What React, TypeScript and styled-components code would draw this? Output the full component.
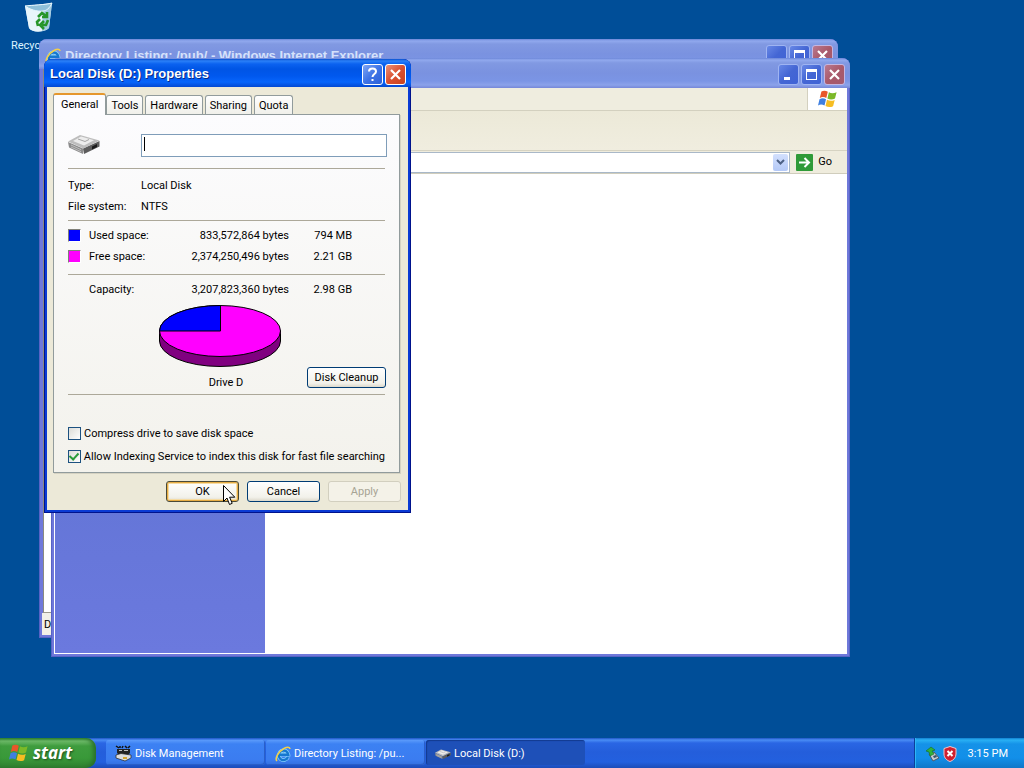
import React from "react";
import styled, { createGlobalStyle, css } from "styled-components";

const uiFont = `Roboto, "Liberation Sans", Arial, sans-serif`;
const titleFont = `"Liberation Sans", Arial, sans-serif`;

const GlobalStyle = createGlobalStyle`
  * { box-sizing: border-box; }
  body { margin: 0; background: #004e98; font-family: ${uiFont}; font-size: 11px; line-height: 16px; color: #000; }
  button, input { font: inherit; color: inherit; margin: 0; }
  svg { display: block; flex: none; }
`;

const Screen = styled.div`
  display: flex;
  flex-direction: column;
  height: 100vh;
  overflow: hidden;
  cursor: default;
`;

const Desktop = styled.main`
  position: relative;
  flex: 1;
  min-height: 0;
  overflow: hidden;
  background: #004e98;
`;

const DesktopItem = styled.a`
  position: absolute;
  left: 0;
  top: 2px;
  width: 78px;
  display: flex;
  flex-direction: column;
  align-items: center;
  gap: 5px;
  color: #dcf4ff;
  font-size: 11px;
  line-height: 16px;
  text-decoration: none;
  white-space: nowrap;
`;

const AppWindow = styled.section<{ $x: number; $y: number }>`
  position: absolute;
  left: ${(p) => p.$x}px;
  top: ${(p) => p.$y}px;
  width: 799px;
  height: 599px;
  display: flex;
  flex-direction: column;
  padding: 0 3px 3px;
  background: #6f78da;
  border-radius: 8px 8px 0 0;
  overflow: hidden;
  box-shadow: inset 1px -1px 0 #5763c4, inset -1px 0 0 #5763c4;
`;

const WindowBar = styled.header`
  display: flex;
  align-items: center;
  justify-content: flex-end;
  gap: 2px;
  flex: none;
  height: 30px;
  margin: 0 -3px;
  padding: 3px 5px 0 6px;
  background: linear-gradient(#6b86d8 0, #91a9ee 2px, #8199e2 5px, #7a92e0 15px, #7b95e5 23px, #8ba2ea 27px, #7587d8 30px);
`;

const BarTitle = styled.h2`
  flex: 1;
  margin: 0 0 0 2px;
  font-family: ${titleFont};
  font-size: 13px;
  line-height: 20px;
  font-weight: 700;
  color: #d5e1fb;
  white-space: nowrap;
`;

const CaptionButton = styled.button<{ $tone: "blue" | "red" | "dimBlue" | "dimRed" }>`
  display: grid;
  place-items: center;
  flex: none;
  width: 21px;
  height: 21px;
  padding: 0;
  border: 1px solid #fff;
  border-radius: 3px;
  color: #fff;
  ${(p) => p.$tone === "blue" && css`background: linear-gradient(135deg, #7fa6f5, #3f74e6 50%, #2c60d8);`}
  ${(p) => p.$tone === "red" && css`background: linear-gradient(135deg, #ec9278, #da5030 50%, #c8431f);`}
  ${(p) => p.$tone === "dimBlue" && css`background: linear-gradient(135deg, #6888e6, #4466d4 50%, #3f62d6); border-color: #9fb4f2;`}
  ${(p) => p.$tone === "dimRed" && css`background: linear-gradient(135deg, #b9798f, #a9596a 50%, #a3596f); border-color: #c5b6e0;`}
`;

const MenuRow = styled.nav`
  display: flex;
  justify-content: flex-end;
  flex: none;
  height: 23px;
  background: #efeddf;
  border-bottom: 1px solid #d3d0bf;
`;

const Throbber = styled.div`
  display: grid;
  place-items: center;
  width: 40px;
  background: #fff;
  border-left: 1px solid #d3d0bf;
`;

const ToolRow = styled.div`
  flex: none;
  height: 40px;
  background: linear-gradient(#ece9d8, #f0eddf);
  border-bottom: 1px solid #d6d3c2;
`;

const AddressRow = styled.form`
  display: flex;
  align-items: center;
  flex: none;
  gap: 6px;
  height: 23px;
  padding: 0 15px 0 2px;
  background: #efecdd;
  border-bottom: 1px solid #d0cdbc;
`;

const AddressBox = styled.div`
  display: flex;
  flex: 1;
  height: 21px;
  padding: 1px;
  background: #fff;
  border: 1px solid #a9b8c8;
`;

const AddressInput = styled.input`
  flex: 1;
  min-width: 0;
  padding: 0 4px;
  border: 0;
  background: none;
  outline: none;
`;

const DropButton = styled.button`
  display: grid;
  place-items: center;
  width: 15px;
  padding: 0;
  border: 0;
  border-radius: 2px;
  background: linear-gradient(#d3e0fd, #b4c9f7);
`;

const GoButton = styled.button`
  display: flex;
  align-items: center;
  gap: 5px;
  padding: 0;
  border: 0;
  background: none;
`;

const FolderBody = styled.div`
  display: flex;
  flex: 1;
  min-height: 0;
  padding: 1px;
  background: #fff;
`;

const TaskPane = styled.aside`
  width: 210px;
  background: linear-gradient(#7ba2e7, #6576d8 70%, #6b79de);
`;

const PageBody = styled.div`
  flex: 1;
  margin-left: 1px;
  background: #fff;
  border-left: 1px solid #8a8a80;
  border-bottom: 1px solid #9c9a8c;
`;

const StatusBar = styled.footer`
  flex: none;
  height: 22px;
  padding: 2px 2px 0;
  line-height: 20px;
  background: #f1f0e8;
`;

const Dialog = styled.section`
  position: absolute;
  left: 44px;
  top: 59px;
  width: 367px;
  background: #0a3ad4;
  padding: 0 3px 3px;
  border-radius: 8px 8px 0 0;
  overflow: hidden;
  box-shadow: inset 1px -1px 0 #00138c, inset -1px 0 0 #00138c;
`;

const DialogBar = styled.header`
  display: flex;
  align-items: center;
  gap: 2px;
  height: 28px;
  margin: 0 -3px;
  padding: 2px 5px 0 6px;
  background: linear-gradient(#0b50cf 0, #2a80f8 2px, #0b62f0 5px, #0055e5 10px, #0058ee 17px, #0765fb 23px, #0349d2 28px);
`;

const DialogTitle = styled.h1`
  flex: 1;
  margin: 0;
  font-family: ${titleFont};
  font-size: 13px;
  line-height: 20px;
  font-weight: 700;
  color: #fff;
  text-shadow: 1px 1px 0 #0a2a88;
  white-space: nowrap;
`;

const DialogBody = styled.form`
  padding: 6px 8px 8px 6px;
  background: #ece9d8;
`;

const Tabs = styled.div`
  display: flex;
  align-items: flex-end;
  gap: 2px;
  height: 21px;
`;

const Tab = styled.button<{ $active?: boolean }>`
  height: 19px;
  padding: 0 4px;
  border: 1px solid #919b9c;
  border-bottom: 0;
  border-radius: 3px 3px 0 0;
  background: linear-gradient(#fefefe, #f0f0ea);
  line-height: 19px;
  ${(p) =>
    p.$active &&
    css`
      position: relative;
      height: 22px;
      margin: 0 -2px -1px 0;
      padding: 0 7px 2px;
      border-top: 2px solid #e5972d;
      background: #fcfcfe;
    `}
`;

const Panel = styled.div`
  padding: 19px 14px 4px;
  border: 1px solid #919b9c;
  background: linear-gradient(#fcfcfe, #f3f2ec);
  box-shadow: 1px 1px 0 #d5d2c2;
`;

const NameRow = styled.div`
  display: flex;
  align-items: flex-start;
  gap: 41px;
  padding-bottom: 11px;
`;

const NameInput = styled.input`
  flex: 1;
  min-width: 0;
  height: 23px;
  margin-right: -2px;
  padding: 0 3px;
  border: 1px solid #7f9db9;
  outline: none;
  caret-color: transparent;
  background: linear-gradient(#000, #000) 2px 2px / 1px 14px no-repeat #fff;
`;

const Facts = styled.dl`
  display: grid;
  grid-template-columns: 73px 1fr;
  margin: 0;
  padding: 6px 0 3px;
  border-top: 1px solid #aca899;
  line-height: 21px;

  dd { margin: 0; }
`;

const SpaceTable = styled.table`
  width: 100%;
  border-top: 1px solid #aca899;
  border-spacing: 0;
  padding-top: 4px;
  line-height: 21px;
  white-space: nowrap;
`;

const SpaceRow = styled.tr<{ $last?: boolean; $total?: boolean }>`
  td, th {
    padding: ${(p) => (p.$total ? "4px 0 0" : p.$last ? "0 0 7px" : "0")};
    border-top: ${(p) => (p.$total ? "1px solid #aca899" : "0")};
    text-align: right;
    font-weight: 400;
  }
  th { text-align: left; width: 98px; }
  td:first-child { width: 21px; }
  td:nth-child(3) { width: 102px; }
  td:nth-child(4) { width: 63px; }
`;

const Swatch = styled.span<{ $color: string }>`
  display: block;
  width: 13px;
  height: 13px;
  margin: 4px 0;
  border: 1px solid;
  border-color: #808078 #fff #fff #808078;
  background: ${(p) => p.$color};
`;

const ChartRow = styled.div`
  display: grid;
  grid-template-columns: 91px 122px 1fr auto;
  grid-template-rows: 62px 27px;
  padding-top: 5px;
  border-bottom: 1px solid #aca899;

  > svg { grid-column: 2; }
`;

const ChartLabel = styled.div`
  grid-column: 2;
  grid-row: 2;
  align-self: end;
  padding: 0 0 3px 12px;
  text-align: center;
`;

const PushButton = styled.button<{ $primary?: boolean }>`
  width: 73px;
  height: 21px;
  padding: 0;
  border: 1px solid #003c74;
  border-radius: 3px;
  background: linear-gradient(#fff, #f2f1ea 80%, #dcd8cb);
  line-height: 18px;
  ${(p) => p.$primary && css`border-color: #4a4a38; box-shadow: inset 0 0 0 1px #e6ac44, inset 0 0 0 2px #f6dca4;`}

  &:disabled { border-color: #d2cfbf; background: #f4f2e8; color: #a7a494; }
`;

const CleanupButton = styled(PushButton)`
  grid-column: 4;
  grid-row: 2;
  width: 79px;
  margin-right: -1px;
`;

const Options = styled.div`
  padding-top: 27px;
`;

const CheckLabel = styled.label`
  display: flex;
  align-items: center;
  gap: 3px;
  height: 23px;
  white-space: nowrap;
`;

const CheckBox = styled.input`
  appearance: none;
  display: grid;
  place-items: center;
  width: 13px;
  height: 13px;
  border: 1px solid #1c5180;
  background: linear-gradient(135deg, #dcdcd7, #fff);

  &:checked::after {
    content: "";
    width: 4px;
    height: 7px;
    margin-top: -2px;
    border: solid #2a9c3a;
    border-width: 0 2px 2px 0;
    transform: rotate(42deg);
  }
`;

const Actions = styled.footer`
  display: flex;
  justify-content: flex-end;
  gap: 8px;
  padding-top: 8px;
  margin-right: -1px;
`;

const Pointer = styled.div`
  position: absolute;
  left: 223px;
  top: 485px;
  pointer-events: none;
`;

const Taskbar = styled.footer`
  display: flex;
  flex: none;
  height: 30px;
  background: linear-gradient(#1f56c6 0, #4a8df5 2px, #2a66e4 5px, #245edb 14px, #2360df 24px, #1c4cb8 30px);
  color: #fff;
`;

const StartButton = styled.button`
  display: flex;
  align-items: center;
  gap: 4px;
  width: 96px;
  padding: 0 0 0 9px;
  border: 0;
  border-radius: 0 10px 10px 0;
  background: linear-gradient(#2f8a30 0, #6fbb6a 3px, #3f9c3e 8px, #399939 20px, #2f8030 30px);
  box-shadow: inset -3px 0 4px #2a702b;
  color: #fff;
  font: italic 700 17px/26px "Open Sans", "Trebuchet MS", sans-serif;
  text-shadow: 1px 1px 2px #1d4f1e;
`;

const TaskList = styled.nav`
  display: flex;
  flex: 1;
  gap: 1px;
  min-width: 0;
  padding: 2px 0 3px 10px;
`;

const TaskButton = styled.button<{ $active?: boolean }>`
  display: flex;
  align-items: center;
  gap: 3px;
  flex: 0 1 159px;
  min-width: 0;
  padding: 2px 9px 0;
  border: 0;
  border-radius: 3px;
  background: ${(p) => (p.$active ? "#1e50b8" : "linear-gradient(#5b9bfb, #3c81f3 4px, #3b7cf0 20px, #336fe0)")};
  box-shadow: ${(p) => (p.$active ? "inset 1px 1px 1px #123a90" : "inset -1px -1px 0 #2a5fc8")};
  white-space: nowrap;
`;

const Tray = styled.div`
  display: flex;
  align-items: center;
  gap: 3px;
  padding: 1px 16px 0 10px;
  border-left: 1px solid #0c3f9a;
  background: linear-gradient(#1180d0 0, #29b0f4 2px, #1592e8 6px, #128fe9 20px, #1077c8 30px);
  box-shadow: inset 1px 0 0 #2fb6f6;
`;

const Clock = styled.time`
  padding-left: 8px;
`;

const Flag = ({ size }: { size: number }) => (
  <svg width={size} height={size} viewBox="0 0 20 20">
    <path d="M3.4 2.6C5.600 1.200 7.800 1.500 9.800 2.800L8.300 9C6.300 7.800 4.100 7.600 1.800 8.900Z" fill="#e8562a" />
    <path d="M10.900 3.300C13.200 4.600 15.800 4.600 18.600 3.200L17 9.500C14.400 10.800 11.800 10.700 9.400 9.500Z" fill="#7cb928" />
    <path d="M1.500 10.200C3.700 9 5.900 9.100 8 10.300L6.500 16.600C4.500 15.400 2.300 15.200 0 16.400Z" fill="#3f7fe0" />
    <path d="M9 10.800C11.500 12 14 12.100 16.700 10.900L15.100 17.200C12.600 18.400 9.900 18.300 7.500 17.100Z" fill="#f6bd22" />
  </svg>
);

const IeLogo = () => (
  <svg width="16" height="16" viewBox="0 0 16 16">
    <path d="M13 11A4.800 4.800 0 1 1 13.300 8.600H5" fill="none" stroke="#8ad4fb" strokeWidth="3.800" />
    <path d="M13 11A4.800 4.800 0 1 1 13.300 8.800H5" fill="none" stroke="#1677cf" strokeWidth="2.400" />
    <path d="M2 15C-.5 12.500 3.500 5.500 9 2.500C12 .9 14.800 .7 15 3" fill="none" stroke="#f3cf4b" strokeWidth="1.600" />
  </svg>
);

const DriveIcon = ({ width, height }: { width: number; height: number }) => (
  <svg width={width} height={height} viewBox="0 0 32 20">
    <path d="M0 8L15 14.500V20L1 13.500Z" fill="#8c8c8c" />
    <path d="M15 14.500L31.500 7V12.500L16 20Z" fill="#5c5c5c" />
    <path d="M0 7.500L12 1L31.500 6.500L15.500 14.500Z" fill="#bdbdbd" />
    <path d="M5 7L13 2.500L26 6.300L16 11.500Z" fill="#ececec" />
    <path d="M10 5L17 7.500L21 5.500" fill="none" stroke="#a5a5a5" />
    <path d="M24 12.500L29 10V13L24 15.500Z" fill="#1a1a1a" />
    <path d="M3 11L13 15.700M3 13L13 17.700" stroke="#c9c9c9" strokeWidth=".8" />
  </svg>
);

const ManagementIcon = () => (
  <svg width="17" height="17" viewBox="0 0 17 17">
    <path d="M1 1L4 3M5 1V3M8 1L7 3M10 1L12 3M15 1L13 3" stroke="#111" strokeWidth="1.500" />
    <path d="M2 4H15V8L13 10H4L2 8Z" fill="#222" />
    <path d="M4 5H7V6H4ZM9 5H13V6H9Z" fill="#bbb" />
    <path d="M1 10L6 8.500L16 10V13L10 16L1 13Z" fill="#ddd" stroke="#222" strokeWidth=".7" />
    <path d="M8 12H12V14H8Z" fill="#d7a52d" />
  </svg>
);

const BinIcon = () => (
  <svg width="30" height="31" viewBox="0 0 30 31">
    <path d="M1 4L28 1L25 26C20 31 8 31 5 26Z" fill="#cfe6f2" />
    <path d="M1 4C8 9 15 10 19 9L18 29C12 30 7 29 5 26Z" fill="#e8f5fb" />
    <path d="M19 9L28 1L25 26C23 28 20 29 18 29Z" fill="#a5cde2" />
    <path d="M1 4C8 3 21 3 28 1C26 6 22 9 19 9C13 10 5 7 1 4Z" fill="#8fc0d9" stroke="#eaf8ff" />
    <g fill="none" stroke="#27962a" strokeWidth="2.600">
      <path d="M14 15L18 11L22 14M23 10V15H18" />
      <path d="M24 18L22 23H18M20 19L16 23L20 27" />
      <path d="M14 24L13 20L16 17" />
    </g>
  </svg>
);

const CrossIcon = () => (
  <svg width="13" height="13" viewBox="0 0 13 13">
    <path d="M2 2L11 11M11 2L2 11" stroke="currentColor" strokeWidth="2.200" />
  </svg>
);

const HelpIcon = () => (
  <svg width="13" height="15" viewBox="0 0 13 15">
    <path d="M3 4.500C3 .5 10 .5 10 4.500C10 7 6.500 7 6.500 10" fill="none" stroke="currentColor" strokeWidth="2" />
    <path d="M5.500 12H7.500V14H5.500Z" fill="currentColor" />
  </svg>
);

const WindowButtons = () => (
  <>
    <CaptionButton type="button" $tone="dimBlue" aria-label="Minimize">
      <svg width="13" height="13"><path d="M2 9H8V12H2Z" fill="currentColor" /></svg>
    </CaptionButton>
    <CaptionButton type="button" $tone="dimBlue" aria-label="Maximize">
      <svg width="13" height="13"><path d="M1 1H12V12H1ZM2 4V11H11V4Z" fillRule="evenodd" fill="currentColor" /></svg>
    </CaptionButton>
    <CaptionButton type="button" $tone="dimRed" aria-label="Close"><CrossIcon /></CaptionButton>
  </>
);

const PieChart = () => (
  <svg width="122" height="62" viewBox="0 0 122 62" role="img" aria-label="Used and free space">
    <path d="M.5 26V36A60.500 25.500 0 0 0 121.500 36V26Z" fill="#800080" stroke="#000" />
    <ellipse cx="61" cy="26" rx="60.500" ry="25.500" fill="#f0f" stroke="#000" />
    <path d="M61.500 .5V26H.5A60.500 25.500 0 0 1 61.500 .5Z" fill="#00f" stroke="#000" />
  </svg>
);

const spaceRows = [
  { label: "Used space:", bytes: "833,572,864 bytes", size: "794 MB", color: "#0000ff" },
  { label: "Free space:", bytes: "2,374,250,496 bytes", size: "2.21 GB", color: "#ff00ff" },
];

const tabs = ["General", "Tools", "Hardware", "Sharing", "Quota"];

export default function App() {
  return (
    <Screen>
      <GlobalStyle />
      <Desktop>
        <DesktopItem href="#recycle-bin">
          <BinIcon />
          Recycle Bin
        </DesktopItem>

        <AppWindow $x={39} $y={39}>
          <WindowBar>
            <IeLogo />
            <BarTitle>Directory Listing: /pub/ - Windows Internet Explorer</BarTitle>
            <WindowButtons />
          </WindowBar>
          <PageBody />
          <StatusBar>Done</StatusBar>
        </AppWindow>

        <AppWindow $x={51} $y={58} aria-label="Folder">
          <WindowBar>
            <WindowButtons />
          </WindowBar>
          <MenuRow>
            <Throbber><Flag size={20} /></Throbber>
          </MenuRow>
          <ToolRow />
          <AddressRow>
            <AddressBox>
              <AddressInput aria-label="Address" />
              <DropButton type="button" aria-label="Show addresses">
                <svg width="9" height="7"><path d="M1 1L4.500 4.500L8 1" fill="none" stroke="#4d6185" strokeWidth="2" /></svg>
              </DropButton>
            </AddressBox>
            <GoButton type="button">
              <svg width="17" height="17" viewBox="0 0 17 17">
                <rect width="17" height="17" rx="1" fill="#2f9a38" />
                <path d="M3 8.500H13M8.500 4L13 8.500L8.500 13" fill="none" stroke="#fff" strokeWidth="2" />
              </svg>
              Go
            </GoButton>
          </AddressRow>
          <FolderBody><TaskPane /></FolderBody>
        </AppWindow>

        <Dialog role="dialog" aria-labelledby="dialog-title">
          <DialogBar>
            <DialogTitle id="dialog-title">Local Disk (D:) Properties</DialogTitle>
            <CaptionButton type="button" $tone="blue" aria-label="Help"><HelpIcon /></CaptionButton>
            <CaptionButton type="button" $tone="red" aria-label="Close"><CrossIcon /></CaptionButton>
          </DialogBar>
          <DialogBody>
            <Tabs role="tablist">
              {tabs.map((name, i) => (
                <Tab key={name} type="button" role="tab" aria-selected={i === 0} $active={i === 0}>{name}</Tab>
              ))}
            </Tabs>
            <Panel role="tabpanel">
              <NameRow>
                <DriveIcon width={32} height={20} />
                <NameInput type="text" aria-label="Volume label" />
              </NameRow>
              <Facts>
                <dt>Type:</dt>
                <dd>Local Disk</dd>
                <dt>File system:</dt>
                <dd>NTFS</dd>
              </Facts>
              <SpaceTable>
                <tbody>
                  {spaceRows.map((row, i) => (
                    <SpaceRow key={row.label} $last={i === spaceRows.length - 1}>
                      <td><Swatch $color={row.color} /></td>
                      <th scope="row">{row.label}</th>
                      <td>{row.bytes}</td>
                      <td>{row.size}</td>
                      <td />
                    </SpaceRow>
                  ))}
                  <SpaceRow $total>
                    <td />
                    <th scope="row">Capacity:</th>
                    <td>3,207,823,360 bytes</td>
                    <td>2.98 GB</td>
                    <td />
                  </SpaceRow>
                </tbody>
              </SpaceTable>
              <ChartRow>
                <PieChart />
                <ChartLabel>Drive D</ChartLabel>
                <CleanupButton type="button">Disk Cleanup</CleanupButton>
              </ChartRow>
              <Options>
                <CheckLabel><CheckBox type="checkbox" />Compress drive to save disk space</CheckLabel>
                <CheckLabel><CheckBox type="checkbox" defaultChecked />Allow Indexing Service to index this disk for fast file searching</CheckLabel>
              </Options>
            </Panel>
            <Actions>
              <PushButton type="button" $primary>OK</PushButton>
              <PushButton type="button">Cancel</PushButton>
              <PushButton type="button" disabled>Apply</PushButton>
            </Actions>
          </DialogBody>
        </Dialog>

        <Pointer>
          <svg width="13" height="21" viewBox="0 0 13 21">
            <path d="M.5 .5V16.500L4 13L6.500 19.500L9.200 18.300L6.600 12.200H11.800Z" fill="#fff" stroke="#000" />
          </svg>
        </Pointer>
      </Desktop>

      <Taskbar>
        <StartButton type="button"><Flag size={20} />start</StartButton>
        <TaskList>
          <TaskButton type="button"><ManagementIcon />Disk Management</TaskButton>
          <TaskButton type="button"><IeLogo />Directory Listing: /pu...</TaskButton>
          <TaskButton type="button" $active><DriveIcon width={16} height={10} />Local Disk (D:)</TaskButton>
        </TaskList>
        <Tray>
          <svg width="15" height="16" viewBox="0 0 15 16">
            <path d="M4 8L9 6L14 12L8 15Z" fill="#c8ccd0" stroke="#4a5a6a" />
            <path d="M8 10L11 9L12 11L9 12Z" fill="#39506a" />
            <path d="M6 1L1 5L4 6L5 10L9 8L7 5L10 4Z" fill="#2fb23a" stroke="#176b22" strokeWidth=".6" />
          </svg>
          <svg width="14" height="16" viewBox="0 0 14 16">
            <path d="M7 .5L13 2.500V8C13 12 10 14.500 7 15.500C4 14.500 1 12 1 8V2.500Z" fill="#cf2030" stroke="#f3c4c8" />
            <path d="M4.500 5L9.500 10M9.500 5L4.500 10" stroke="#fff" strokeWidth="2" />
          </svg>
          <Clock>3:15 PM</Clock>
        </Tray>
      </Taskbar>
    </Screen>
  );
}
